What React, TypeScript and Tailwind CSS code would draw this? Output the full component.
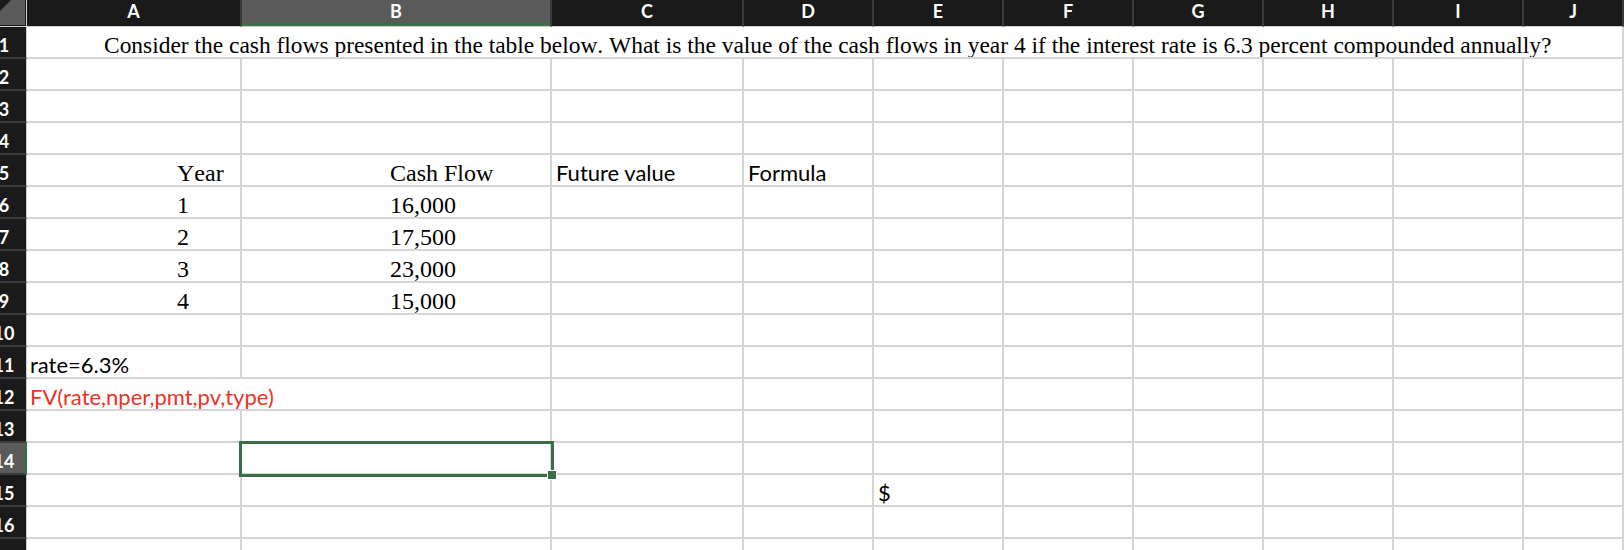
import React from 'react';

const serifBase = "font-['Liberation_Serif','Times_New_Roman',serif] text-black [font-kerning:none]";
const serif = `${serifBase} text-[24px] leading-[24px]`;
const sans = "font-['Lato','Open_Sans',sans-serif] text-[22px] leading-[22px] pb-[1px]";

const COLS = [
  { id: 'A', w: 'w-[215px]' },
  { id: 'B', w: 'w-[310px]' },
  { id: 'C', w: 'w-[192px]' },
  { id: 'D', w: 'w-[130px]' },
  { id: 'E', w: 'w-[130px]' },
  { id: 'F', w: 'w-[130px]' },
  { id: 'G', w: 'w-[130px]' },
  { id: 'H', w: 'w-[130px]' },
  { id: 'I', w: 'w-[130px]' },
  { id: 'J', w: 'flex-1' },
];

const years = [
  ['1', '16,000'],
  ['2', '17,500'],
  ['3', '23,000'],
  ['4', '15,000'],
];

// cell contents keyed by address
const content: Record<string, React.ReactNode> = {
  A5: <span className={`${serif} pl-[150px]`}>Year</span>,
  B5: <span className={`${serif} pl-[148px]`}>Cash Flow</span>,
  C5: <span className={`${sans} pl-[4px]`}>Future value</span>,
  D5: <span className={`${sans} pl-[4px]`}>Formula</span>,
  A11: <span className={`${sans} pl-[3px]`}>rate=6.3%</span>,
  E15: <span className={`${sans} pl-[4px]`}>$</span>,
};
years.forEach(([y, cf], i) => {
  content[`A${6 + i}`] = <span className={`${serif} pl-[150px]`}>{y}</span>;
  content[`B${6 + i}`] = <span className={`${serif} pl-[148px]`}>{cf}</span>;
});

const cellCls = 'shrink-0 h-full flex items-end whitespace-nowrap overflow-hidden border-r-2 border-b-2 border-[#d4d4d4]';

const RowHeader: React.FC<{ n: number }> = ({ n }) => {
  const active = n === 14;
  return (
    <div
      className={`w-[27px] shrink-0 h-full flex items-end overflow-hidden border-b-2 border-b-[#3d3d3d] ${
        active ? 'bg-[#5a5a5a] border-r-[3px] border-r-[#3a6f48]' : 'bg-[#1a1a1a] border-r border-r-[#cfcfcf]'
      }`}
    >
      <div className="w-[40px] ml-[-16px] shrink-0 text-center font-['Lato','Open_Sans',sans-serif] font-bold text-white text-[18px] leading-[18px] pb-[3px]">
        {n}
      </div>
    </div>
  );
};

const Row: React.FC<{ n: number }> = ({ n }) => {
  if (n === 1) {
    return (
      <div className="flex h-[32px]">
        <RowHeader n={n} />
        <div className={`${cellCls} flex-1 border-r-0`}>
          <span className={`${serifBase} text-[23.45px] leading-[24px] pl-[77px]`}>
            Consider the cash flows presented in the table below. What is the value of the cash flows in year 4 if the interest rate is 6.3 percent compounded annually?
          </span>
        </div>
      </div>
    );
  }

  if (n === 12) {
    return (
      <div className="flex h-[32px]">
        <RowHeader n={n} />
        <div className={`${cellCls} w-[525px]`}>
          <span className={`${sans} pl-[3px] text-[#ea3323]`}>FV(rate,nper,pmt,pv,type)</span>
        </div>
        {COLS.slice(2).map((c) => (
          <div key={c.id} className={`${cellCls} ${c.w}`} />
        ))}
      </div>
    );
  }

  return (
    <div className="flex h-[32px]">
      <RowHeader n={n} />
      {COLS.map((c) => (
        <div key={c.id} className={`${cellCls} ${c.w}`}>
          {content[`${c.id}${n}`]}
        </div>
      ))}
    </div>
  );
};

const App: React.FC = () => {
  const rows = Array.from({ length: 17 }, (_, i) => i + 1);

  return (
    <div className="relative w-[1624px] h-[550px] overflow-hidden bg-white">
      {/* Column headers */}
      <div className="flex h-[27px]">
        <div className="w-[27px] shrink-0 h-full bg-[#1a1a1a] border-r border-b border-[#cfcfcf]">
          <svg width="26" height="26" viewBox="0 0 26 26" className="block">
            <polygon points="0,11 11,0 25,0 25,25 0,25" fill="#5b5b5b" />
          </svg>
        </div>
        {COLS.map((c) => (
          <div
            key={c.id}
            className={`${c.w} shrink-0 h-full flex justify-center items-start border-b border-b-[#cfcfcf] border-r-2 border-r-[#3a3a3a] ${
              c.id === 'B' ? 'bg-[#5a5a5a] shadow-[inset_0_-3px_0_#3a6f48]' : 'bg-[#1a1a1a]'
            }`}
          >
            <span className="mt-[2px] font-['Lato','Open_Sans',sans-serif] font-bold text-white text-[18px] leading-[18px]">
              {c.id}
            </span>
          </div>
        ))}
      </div>

      {/* Rows */}
      {rows.map((n) => (
        <Row key={n} n={n} />
      ))}

      {/* Active cell B14 */}
      <div className="absolute left-[239px] top-[441px] w-[315px] h-[36px] border-[3px] border-[#3a6f48]">
        <div className="absolute right-[-6px] bottom-[-6px] w-[10px] h-[10px] bg-[#3a6f48] border border-white" />
      </div>
    </div>
  );
};

export default App;
